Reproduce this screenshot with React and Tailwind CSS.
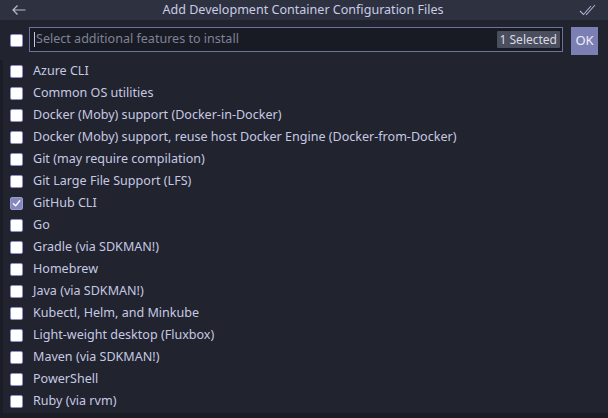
import React from "react";

const items = [
  "Azure CLI",
  "Common OS utilities",
  "Docker (Moby) support (Docker-in-Docker)",
  "Docker (Moby) support, reuse host Docker Engine (Docker-from-Docker)",
  "Git (may require compilation)",
  "Git Large File Support (LFS)",
  "GitHub CLI",
  "Go",
  "Gradle (via SDKMAN!)",
  "Homebrew",
  "Java (via SDKMAN!)",
  "Kubectl, Helm, and Minkube",
  "Light-weight desktop (Fluxbox)",
  "Maven (via SDKMAN!)",
  "PowerShell",
  "Ruby (via rvm)",
];

const selected = ["GitHub CLI"];

// Checkbox box
function Check({ checked }) {
  return checked ? (
    <span className="flex h-[13px] w-[13px] items-center justify-center rounded-[2px] border border-[#9a9dd0] bg-[#8587bd]">
      <svg width="9" height="9" viewBox="0 0 10 10" fill="none">
        <path d="M1.5 5.2 L4 7.6 L8.6 2" stroke="#fff" strokeWidth="1.6" strokeLinecap="round" strokeLinejoin="round" />
      </svg>
    </span>
  ) : (
    <span className="block h-[13px] w-[13px] rounded-[2px] border border-[#8d90c4] bg-white" />
  );
}

export default function App() {
  return (
    <div
      className="flex h-[418px] w-[608px] flex-col overflow-hidden bg-[#21232e] text-[12.55px] text-[#c6c9e2]"
      style={{ fontFamily: '"Noto Sans", "Open Sans", sans-serif' }}
    >
      {/* title */}
      <div className="flex h-[20px] shrink-0 items-center bg-[#2e3140] px-[10px]">
        <svg width="16" height="12" viewBox="0 0 16 12" fill="none" className="ml-[1px]">
          <path d="M14.5 6 H2 M6.5 1.5 L2 6 L6.5 10.5" stroke="#b8bbd4" strokeWidth="1.2" />
        </svg>
        <div className="flex-1 pt-[1px] text-center leading-none text-[#c9cce4]">
          Add Development Container Configuration Files
        </div>
        <svg width="18" height="14" viewBox="0 0 18 14" fill="none" className="mr-[1px]">
          <path d="M1 8 L4.5 11.5 L12 3 M7 11 L7.5 11.5 L16 2" stroke="#aeb1cc" strokeWidth="1.1" />
        </svg>
      </div>

      {/* input row */}
      <div className="flex h-[40px] shrink-0 items-start pl-[10px] pr-[10px] pt-[7px]">
        <div className="mt-[7px]">
          <Check />
        </div>
        <div className="ml-[6px] flex h-[25px] flex-1 items-center border border-[#6c72a0] bg-[#191b24] pl-[4px] pr-[2px]">
          <span className="h-[15px] w-px bg-[#c6c9e2]" />
          <span className="flex-1 truncate pl-[1px] text-[#7f8296]">Select additional features to install</span>
          <span className="rounded-[1px] bg-[#4b4e5c] px-[3px] text-[12px] leading-[17px] text-[#d9dbe8]">
            {selected.length} Selected
          </span>
        </div>
        <button className="ml-[8px] flex h-[28px] w-[27px] items-center justify-center bg-[#7c7fb3] text-[13px] text-[#eceefa]">
          OK
        </button>
      </div>

      {/* list */}
      <div className="flex flex-1 flex-col border-l-[3px] border-[#1b1d26] pl-[7px]">
        {items.map((name) => (
          <div key={name} className="flex h-[22px] items-center gap-[10px]">
            <Check checked={selected.includes(name)} />
            <span className="whitespace-nowrap">{name}</span>
          </div>
        ))}
      </div>
      <div className="h-[5px] shrink-0 bg-[#1b1d26]" />
    </div>
  );
}
